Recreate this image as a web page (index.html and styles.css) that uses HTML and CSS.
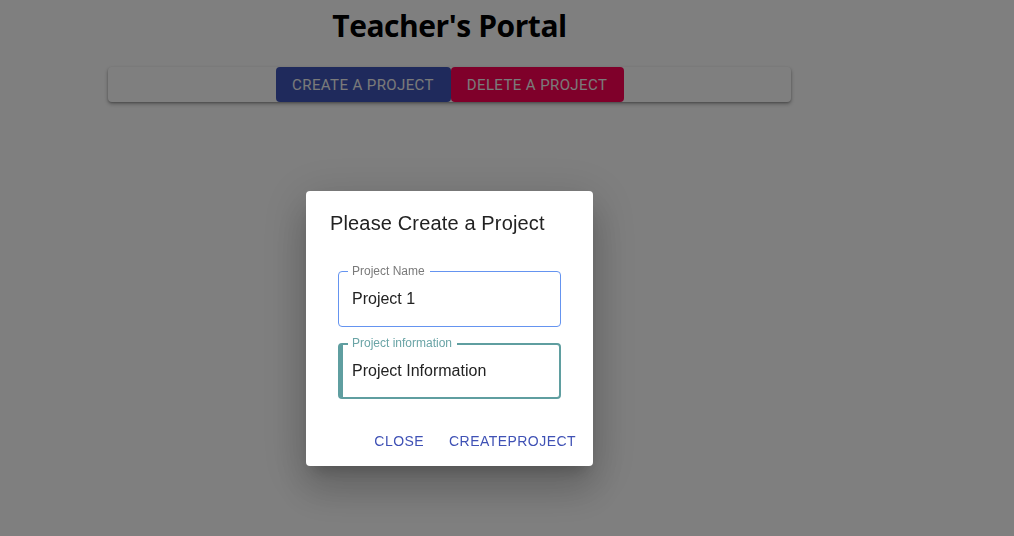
FILE: index.html
```html
<!DOCTYPE html>
<html>
<head>
<meta charset="utf-8">
<link rel="stylesheet" href="styles.css">
</head>
<body>
<div class="page">
  <h1 class="title">Teacher's Portal</h1>
  <div class="bar">
    <button class="btn btn-create">CREATE A PROJECT</button>
    <button class="btn btn-delete">DELETE A PROJECT</button>
  </div>
</div>
<div class="overlay">
  <div class="dialog">
    <h2 class="dialog-title">Please Create a Project</h2>
    <div class="fields">
      <div class="field field-name">
        <span class="label">Project Name</span>
        <span class="value">Project 1</span>
      </div>
      <div class="field field-info">
        <span class="label">Project information</span>
        <span class="value">Project Information</span>
      </div>
    </div>
    <div class="actions">
      <button class="action">CLOSE</button>
      <button class="action">CREATEPROJECT</button>
    </div>
  </div>
</div>
</body>
</html>
```

FILE: styles.css
```css
html, body {
  margin: 0;
  padding: 0;
  background: #ffffff;
  height: 100%;
}
body {
  font-family: "Liberation Sans", Arial, sans-serif;
}
.page {
  width: 683px;
  margin-left: 108px;
  padding-top: 6px;
}
.title {
  margin: 0;
  font-family: "Open Sans", sans-serif;
  font-weight: 700;
  font-size: 30px;
  line-height: 40px;
  text-align: center;
  color: #000;
  letter-spacing: -0.45px;
}
.bar {
  margin-top: 21px;
  height: 35px;
  background: #fff;
  border-radius: 4px;
  box-shadow: 0 2px 4px rgba(0,0,0,0.3), 0 1px 2px rgba(0,0,0,0.2);
  display: flex;
  justify-content: center;
}
.btn {
  border: none;
  border-radius: 4px;
  height: 35px;
  font-family: Roboto, sans-serif;
  font-weight: 400;
  font-size: 15px;
  color: #f4f4f4;
  padding: 0;
  letter-spacing: 0.4px;
  cursor: pointer;
}
.btn-create {
  background: #3f55b8;
  width: 175px;
}
.btn-delete {
  background: #ff0055;
  width: 173px;
}
.overlay {
  position: fixed;
  inset: 0;
  background: rgba(0,0,0,0.5);
  display: flex;
  align-items: flex-start;
  justify-content: center;
  padding-top: 191px;
  padding-right: 115px;
}
.dialog {
  width: 287px;
  height: 275px;
  box-sizing: border-box;
  background: #fff;
  border-radius: 4px;
  box-shadow: 0 11px 15px -7px rgba(0,0,0,0.2), 0 24px 38px 3px rgba(0,0,0,0.14), 0 9px 46px 8px rgba(0,0,0,0.12);
  padding: 20px 9px 0 24px;
  display: flex;
  flex-direction: column;
}
.dialog-title {
  margin: 0;
  font-size: 20px;
  font-weight: 400;
  line-height: 24px;
  color: #222;
  letter-spacing: 0.15px;
}
.fields {
  margin-top: 36px;
  padding-left: 8px;
  display: flex;
  flex-direction: column;
  gap: 16px;
}
.field {
  position: relative;
  box-sizing: border-box;
  width: 223px;
  height: 56px;
  border-radius: 4px;
  padding: 0 13px;
  display: flex;
  align-items: center;
}
.label {
  position: absolute;
  top: -8px;
  left: 9px;
  font-size: 12px;
  line-height: 14px;
  padding: 0 5px 0 4px;
  background: #fff;
}
.value {
  font-size: 16px;
  color: #222;
}
.field-name {
  border: 1px solid #6594f0;
}
.field-name .label {
  color: #7a7a7a;
}
.field-info {
  border: 2px solid #5f9ea0;
  border-left-width: 5px;
  padding-left: 9px;
}
.field-info .label {
  top: -9px;
  left: 5px;
  color: #6aa4a6;
}
.actions {
  margin-top: 27px;
  display: flex;
  justify-content: flex-end;
  gap: 9px;
}
.action {
  background: none;
  border: none;
  font-family: "Liberation Sans", Arial, sans-serif;
  font-size: 14px;
  letter-spacing: 0.45px;
  color: #3f51b5;
  padding: 7px 8px;
  line-height: 16px;
  cursor: pointer;
}
```
